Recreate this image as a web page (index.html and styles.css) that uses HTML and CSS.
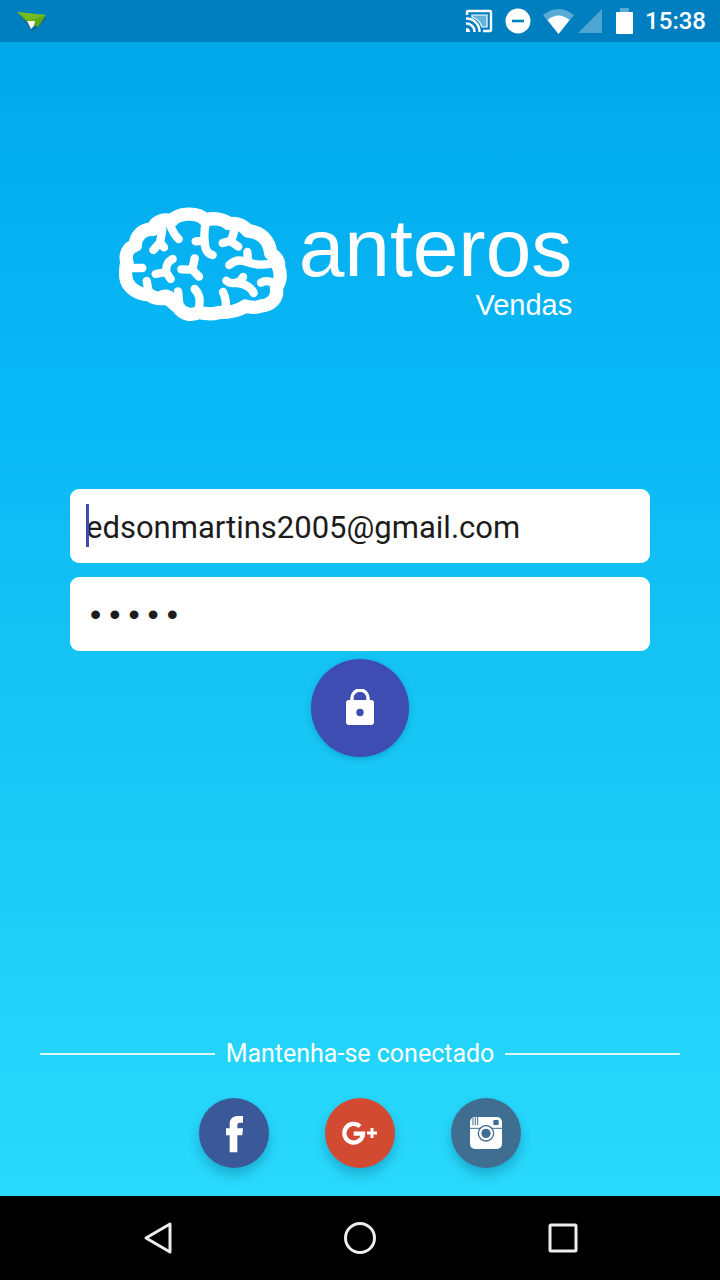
FILE: index.html
```html
<!DOCTYPE html>
<html lang="pt-BR">
<head>
<meta charset="utf-8">
<meta name="viewport" content="width=device-width, initial-scale=1">
<title>Anteros Vendas</title>
<link rel="stylesheet" href="styles.css">
</head>
<body class="screen">
<header class="status">
  <svg class="status-app" width="32" height="20" viewBox="0 0 32 20" aria-hidden="true">
    <path d="M2 2L16 20L21 17L31 7Z" fill="#155b76" opacity=".6"/>
    <path d="M1 1L30 4L22 16L10 10Z" fill="#5cab16"/>
    <path d="M1 1L30 4L13 10Z" fill="#72be22"/>
    <path d="M11 10L19 10L18 15L15 18Z" fill="#fbfbe8"/>
  </svg>
  <div class="status-icons">
    <svg width="28" height="24" viewBox="0 0 28 24" fill="none" stroke="#fff" aria-hidden="true">
      <path d="M2 6V3Q2 2 3 2H25Q26 2 26 3V21Q26 22 25 22H18" stroke-width="2.4"/>
      <path d="M7 6H22V18H17Q14 10 7 8Z" fill="#fff" fill-opacity=".4" stroke-width="1.2"/>
      <path d="M1 9.500A13 13 0 0 1 14.500 23M1 14.500A8 8 0 0 1 9.500 23" stroke-width="2.4"/>
      <path d="M1 19Q5 19 5 23H1Z" fill="#fff" stroke="none"/>
    </svg>
    <svg width="26" height="26" viewBox="0 0 26 26" aria-hidden="true">
      <circle cx="13" cy="13" r="12.500" fill="#fff"/><path d="M7 13H19" stroke="#007fc0" stroke-width="2.6"/>
    </svg>
    <svg width="31" height="25" viewBox="0 0 31 25" aria-hidden="true">
      <path d="M0 6Q15.500-6 31 6L15.500 25Z" fill="#fff" opacity=".35"/>
      <path d="M4.500 11Q15.500 2 26.500 11L15.500 25Z" fill="#fff"/>
    </svg>
    <svg class="signal" width="24" height="24" viewBox="0 0 24 24" aria-hidden="true"><path d="M24 0V24H0Z" fill="#fff" opacity=".3"/></svg>
    <svg class="battery" width="17" height="26" viewBox="0 0 17 26" aria-hidden="true">
      <path d="M4 0H13V4H4Z" fill="#fff" opacity=".35"/><rect y="4" width="17" height="22" rx="1" fill="#fff"/>
    </svg>
    <time class="clock">15:38</time>
  </div>
</header>

<main class="content">
  <h1 class="brand">
    <svg class="brain" width="185" height="130" viewBox="0 0 555 390" fill="none" stroke="#fff" stroke-linecap="round" stroke-linejoin="round" aria-hidden="true">
      <path stroke-width="40" d="M51 188C43 162 55 142 76 136C76 108 98 86 128 88C134 68 157 54 184 63C204 38 263 34 286 60C315 52 343 58 356 71C383 67 402 77 413 93C452 94 479 122 482 160C500 172 508 185 505 200C516 225 509 250 499 262C505 293 485 316 453 318C432 326 415 321 406 318C385 334 350 338 325 338C305 343 280 342 268 336C245 350 217 342 205 322C192 312 182 302 172 294C158 298 130 296 118 284C82 284 53 262 48 235C46 220 46 203 51 188Z"/>
      <g stroke-width="25">
        <path d="M180 75C188 94 195 108 206 117M157 88L150 128L130 150M150 128L162 142"/>
        <path d="M288 65C282 90 282 105 284 122C284 150 294 162 308 165M284 122L257 124"/>
        <path d="M374 78C372 100 368 112 362 122L338 129M362 124L385 140"/>
        <path d="M412 156L414 184M358 195C380 174 400 182 425 190C450 198 475 192 498 190"/>
        <path d="M349 242C362 255 392 250 399 231M380 249C405 250 426 265 431 279"/>
        <path d="M453 248C465 240 485 244 500 252"/>
        <path d="M188 177C165 188 170 208 168 216L137 222M168 216L182 237"/>
        <path d="M254 175L247 209L214 208M247 209L267 230"/>
        <path d="M58 204H97M110 243L116 275M150 286C170 276 185 284 185 294"/>
        <path d="M204 274C208 300 205 312 212 330M254 267C276 290 268 310 266 330M339 276C350 300 350 315 344 330"/>
      </g>
    </svg>
    <span class="wordmark"><span class="name">anteros</span><span class="product">Vendas</span></span>
  </h1>

  <form class="login">
    <div class="field">
      <input class="input" type="email" aria-label="E-mail" value="edsonmartins2005@gmail.com">
      <span class="caret"></span>
    </div>
    <div class="field"><input class="input password" type="password" aria-label="Senha" value="12345"></div>
    <button class="submit" type="button" aria-label="Entrar">
      <svg width="30" height="38" viewBox="0 0 30 38" aria-hidden="true">
        <path d="M7 14V9A8 8 0 0 1 23 9V14" fill="none" stroke="#fff" stroke-width="3.400"/>
        <rect x="1" y="11" width="28" height="25" rx="3" fill="#fff"/><circle cx="15" cy="23.500" r="3.700" fill="#3d4db1"/>
      </svg>
    </button>
  </form>

  <section class="social">
    <h2 class="divider">Mantenha-se conectado</h2>
    <nav class="links">
      <a class="link facebook" href="#" aria-label="Facebook">
        <svg width="70" height="70" viewBox="0 0 210 210" aria-hidden="true"><path d="M92 163V112H81V91H92V79C92 60 104 54 117 54H132V74H122Q115 74 115 82V91H132L130 112H115V163Z" fill="#fff"/></svg>
      </a>
      <a class="link google" href="#" aria-label="Google+">
        <svg width="70" height="70" viewBox="0 0 210 210" fill="none" stroke="#fff" aria-hidden="true"><path d="M105 85A28 28 0 1 0 114 107H86" stroke-width="13"/><path d="M141 90V120M126 105H156" stroke-width="9"/></svg>
      </a>
      <a class="link instagram" href="#" aria-label="Instagram">
        <svg width="70" height="70" viewBox="0 0 210 210" aria-hidden="true">
          <rect x="57" y="57" width="96" height="96" rx="15" fill="#fff"/>
          <g fill="none" stroke="#3f6e91"><path d="M57 91H153M66 60V82M73 58V82M80 57V82" stroke-width="3"/><circle cx="105" cy="106" r="23" fill="#fff" stroke-width="4"/></g>
          <circle cx="105" cy="106" r="14" fill="#3f6e91"/><rect x="127" y="66" width="16" height="15" rx="2" fill="#3f6e91"/>
        </svg>
      </a>
    </nav>
  </section>
</main>

<footer class="navbar">
  <button class="key" type="button" aria-label="Voltar"><svg width="34" height="34" viewBox="0 0 34 34"><path d="M6 17L30 3V31Z"/></svg></button>
  <button class="key" type="button" aria-label="Início"><svg width="34" height="34" viewBox="0 0 34 34"><circle cx="17" cy="17" r="14.500"/></svg></button>
  <button class="key" type="button" aria-label="Recentes"><svg width="34" height="34" viewBox="0 0 34 34"><rect x="4" y="4" width="26" height="26" rx="1"/></svg></button>
</footer>
</body>
</html>
```
FILE: styles.css
```css
* { box-sizing: border-box; }

.screen {
  margin: 0;
  min-height: 100vh;
  display: flex;
  flex-direction: column;
  font-family: Roboto, "Noto Sans", sans-serif;
  color: #fff;
  background: #000;
}

.status {
  height: 42px;
  padding: 0 14px 0 16px;
  display: flex;
  align-items: center;
  justify-content: space-between;
  background: #007fc0;
}
.status svg { display: block; }
.status-icons { display: flex; align-items: center; gap: 12px; }
.signal { margin-left: -8px; }
.battery { margin-left: 2px; }
.clock { font-size: 24px; font-weight: 500; line-height: 42px; }

.content {
  flex: 1;
  display: flex;
  flex-direction: column;
  background: linear-gradient(#00a8ea 0%, #0abaf8 34%, #13c1f3 50%, #29dafc 100%);
}

.brand {
  margin: 158px 0 0;
  padding-right: 38px;
  display: flex;
  justify-content: center;
  align-items: flex-start;
  gap: 4px;
  font-family: "Liberation Sans", Arial, sans-serif;
  font-weight: 400;
}
.brain { display: block; }
.wordmark { display: flex; flex-direction: column; align-items: flex-end; }
.name { font-size: 82px; line-height: 96px; }
.product { font-size: 29px; line-height: 18px; }

.login {
  margin-top: 159px;
  padding: 0 70px;
  display: flex;
  flex-direction: column;
  align-items: center;
}
.field { position: relative; width: 100%; margin-bottom: 14px; }
.field:nth-child(2) { margin-bottom: 8px; }
.input {
  display: block;
  width: 100%;
  height: 74px;
  padding: 2px 16px 0;
  border: 0;
  border-radius: 9px;
  outline: 0;
  background: #fff;
  color: #1c1c1c;
  font: 31px Roboto, "Noto Sans", sans-serif;
}
.password { padding-top: 5px; font-family: "Liberation Mono", monospace; font-size: 32px; }
.caret {
  position: absolute;
  left: 16px;
  top: 15px;
  width: 3px;
  height: 43px;
  background: #3d4db1;
}
.submit {
  width: 98px;
  height: 98px;
  padding: 0;
  border: 0;
  border-radius: 50%;
  display: grid;
  place-items: center;
  background: #3d4db1;
  box-shadow: 0 2px 6px rgba(0, 60, 100, .25);
}

.social { margin-top: auto; padding: 0 40px 28px; }
.divider {
  margin: 0 0 28px;
  display: flex;
  align-items: center;
  gap: 11px;
  font-size: 25px;
  line-height: 32px;
  font-weight: 400;
}
.divider::before, .divider::after { content: ""; flex: 1; height: 2px; background: #d8f7ff; }
.links { display: flex; justify-content: center; gap: 56px; }
.link { width: 70px; height: 70px; border-radius: 50%; box-shadow: 0 7px 12px rgba(0, 70, 110, .3); }
.link svg { display: block; }
.facebook { background: #3b5998; }
.google { background: #d34a32; }
.instagram { background: #3f6e91; }

.navbar {
  height: 84px;
  padding: 0 56px;
  display: grid;
  grid-template-columns: repeat(3, 1fr);
  place-items: center;
  background: #000;
}
.key { padding: 0; border: 0; background: none; }
.key svg { display: block; fill: none; stroke: #eee; stroke-width: 3; stroke-linejoin: round; }
```
